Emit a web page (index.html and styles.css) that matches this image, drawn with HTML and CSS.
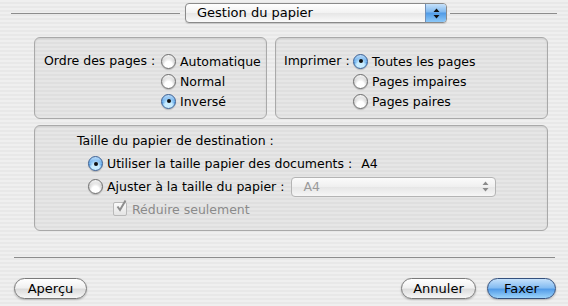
FILE: index.html
```html
<!DOCTYPE html>
<html lang="fr">
<head>
    <meta charset="UTF-8">
    <title>Gestion du papier</title>
    <link rel="stylesheet" href="styles.css">
</head>
<body>
    <div class="sheet">
        <div class="header">
            <span class="rule rule-left"></span>
            <div class="popup">
                <span class="popup-label">Gestion du papier</span>
                <span class="popup-arrows">
                    <svg width="7" height="11" viewBox="0 0 7 11"><path d="M3.5 0.5 L6.5 4 L0.5 4 Z M0.5 7 L6.5 7 L3.5 10.5 Z" fill="#111"/></svg>
                </span>
            </div>
            <span class="rule rule-right"></span>
        </div>

        <div class="groups">
            <div class="group group-order">
                <span class="group-label">Ordre des pages :</span>
                <div class="options">
                    <label class="option"><span class="radio"></span>Automatique</label>
                    <label class="option"><span class="radio"></span>Normal</label>
                    <label class="option"><span class="radio checked"></span>Inversé</label>
                </div>
            </div>
            <div class="group group-print">
                <span class="group-label">Imprimer :</span>
                <div class="options">
                    <label class="option"><span class="radio checked"></span>Toutes les pages</label>
                    <label class="option"><span class="radio"></span>Pages impaires</label>
                    <label class="option"><span class="radio"></span>Pages paires</label>
                </div>
            </div>
        </div>

        <div class="group group-size">
            <div class="size-title">Taille du papier de destination :</div>
            <label class="option size-row"><span class="radio checked"></span>Utiliser la taille papier des documents :<span class="size-value">A4</span></label>
            <label class="option size-row size-fit"><span class="radio"></span>Ajuster à la taille du papier :
                <span class="mini-popup">
                    <span>A4</span>
                    <svg width="7" height="11" viewBox="0 0 7 11"><path d="M3.5 0.5 L6.5 4 L0.5 4 Z M0.5 7 L6.5 7 L3.5 10.5 Z" fill="#8a8a8a"/></svg>
                </span>
            </label>
            <label class="option check-row">
                <span class="checkbox">
                    <svg width="13" height="13" viewBox="0 0 13 13"><path d="M2.5 6.5 L5 10 L10.5 0.5" fill="none" stroke="#8d8d8d" stroke-width="2"/></svg>
                </span>
                Réduire seulement
            </label>
        </div>

        <div class="footer-rule"></div>

        <div class="buttons">
            <button class="btn btn-preview">Aperçu</button>
            <span class="spacer"></span>
            <button class="btn btn-cancel">Annuler</button>
            <button class="btn btn-default">Faxer</button>
        </div>
    </div>
</body>
</html>
```

FILE: styles.css
```css
body, html {
    margin: 0;
    height: 100%;
}

body {
    font-family: "DejaVu Sans", sans-serif;
    font-size: 12.5px;
    color: #000;
    background: repeating-linear-gradient(#efefef 0 2px, #e8e8e8 2px 4px);
}

.sheet {
    width: 568px;
    height: 306px;
    position: relative;
}

/* top popup with rules */
.header {
    display: flex;
    align-items: center;
    padding: 3px 11px 0 11px;
    height: 20px;
}

.rule {
    height: 1px;
    background: #8c8c8c;
}

.rule-left {
    width: 169px;
    margin-right: 5px;
}

.rule-right {
    flex: 1;
    margin-left: 3px;
}

.popup {
    width: 262px;
    height: 20px;
    box-sizing: border-box;
    display: flex;
    border: 1px solid #8a8a8a;
    border-radius: 4px;
    background: linear-gradient(#ffffff, #f2f2f2 50%, #e6e6e6 51%, #fafafa);
    box-shadow: 0 1px 1px rgba(0,0,0,0.15);
    overflow: hidden;
}

.popup-label {
    flex: 1;
    padding-left: 11px;
    line-height: 18px;
    font-size: 13px;
}

.popup-arrows {
    width: 20px;
    display: flex;
    align-items: center;
    justify-content: center;
    background: linear-gradient(#c6e1fa, #7fb8ef 45%, #4f9ae6 50%, #8cc8f8 100%);
    border-left: 1px solid #6f8fb8;
}

/* group boxes */
.groups {
    display: flex;
    gap: 8px;
    margin: 14px 20px 0 34px;
}

.group {
    box-sizing: border-box;
    border: 1px solid #a9a9a9;
    border-radius: 6px;
    background: rgba(0,0,0,0.035);
    box-shadow: inset 0 1px 2px rgba(0,0,0,0.08);
}

.group-order {
    width: 233px;
    height: 82px;
    display: flex;
    padding: 13px 0 0 9px;
}

.group-print {
    flex: 1;
    height: 82px;
    display: flex;
    padding: 13px 0 0 8px;
}

.group-label {
    line-height: 20px;
    margin-right: 4px;
    white-space: nowrap;
    flex: none;
}

.group-order .group-label {
    width: 113px;
}

.group-print .group-label {
    width: 65px;
}

.options {
    display: flex;
    flex-direction: column;
}

.option {
    display: flex;
    align-items: center;
    height: 20px;
    white-space: nowrap;
}

/* aqua radio buttons */
.radio {
    width: 15px;
    height: 15px;
    box-sizing: border-box;
    border-radius: 50%;
    border: 1px solid #6e6e6e;
    background: radial-gradient(circle at 50% 75%, #ffffff 0 30%, transparent 60%), linear-gradient(#f4f4f4, #cfcfcf 55%, #e2e2e2);
    box-shadow: 0 1px 1px rgba(0,0,0,0.2);
    margin-right: 4px;
    position: relative;
    flex: none;
}

.radio.checked {
    border-color: #3a5f93;
    background: radial-gradient(circle at 50% 80%, #c8ecff 0 30%, transparent 60%), linear-gradient(#b9dbf9, #6aaeec 50%, #3f8fe0 55%, #8ec9f8);
}

.radio.checked::after {
    content: "";
    position: absolute;
    width: 4px;
    height: 4px;
    border-radius: 50%;
    background: #111;
    left: 4.5px;
    top: 4.5px;
}

/* destination size box */
.group-size {
    margin: 6px 20px 0 34px;
    height: 106px;
    padding: 4px 0 0 53px;
}

.size-title {
    line-height: 22px;
    margin-left: -11px;
}

.size-row {
    height: 23px;
}

.size-value {
    margin-left: 9px;
}

.mini-popup {
    display: flex;
    align-items: center;
    justify-content: space-between;
    box-sizing: border-box;
    width: 205px;
    height: 20px;
    margin-left: 7px;
    padding: 0 6px 0 11px;
    border: 1px solid #b4b4b4;
    border-radius: 4px;
    background: linear-gradient(#fbfbfb, #efefef 50%, #e6e6e6 51%, #f6f6f6);
    color: #9a9a9a;
}

.check-row {
    padding-left: 25px;
    height: 22px;
    color: #8a8a8a;
}

.checkbox {
    width: 14px;
    height: 14px;
    box-sizing: border-box;
    border: 1px solid #b9b9b9;
    border-radius: 2px;
    background: linear-gradient(#fafafa, #e4e4e4);
    margin-right: 5px;
    position: relative;
}

.checkbox svg {
    position: absolute;
    left: 1px;
    top: -3px;
}

/* footer */
.footer-rule {
    height: 1px;
    background: #8c8c8c;
    margin: 26px 13px 0 14px;
}

.buttons {
    display: flex;
    align-items: center;
    padding: 20px 12px 0 14px;
}

.spacer {
    flex: 1;
}

.btn {
    font-family: inherit;
    font-size: 13px;
    height: 21px;
    border-radius: 11px;
    border: 1px solid #7a7a7a;
    background: linear-gradient(#ffffff, #f1f1f1 45%, #dcdcdc 55%, #f7f7f7);
    box-shadow: 0 1px 2px rgba(0,0,0,0.25);
    padding: 0;
    color: #000;
}

.btn-preview {
    width: 73px;
}

.btn-cancel {
    width: 75px;
    margin-right: 11px;
}

.btn-default {
    width: 69px;
    border-color: #34507d;
    background: linear-gradient(#c5e1fb, #86bdf2 45%, #549de8 55%, #9cd4fb);
}
```
